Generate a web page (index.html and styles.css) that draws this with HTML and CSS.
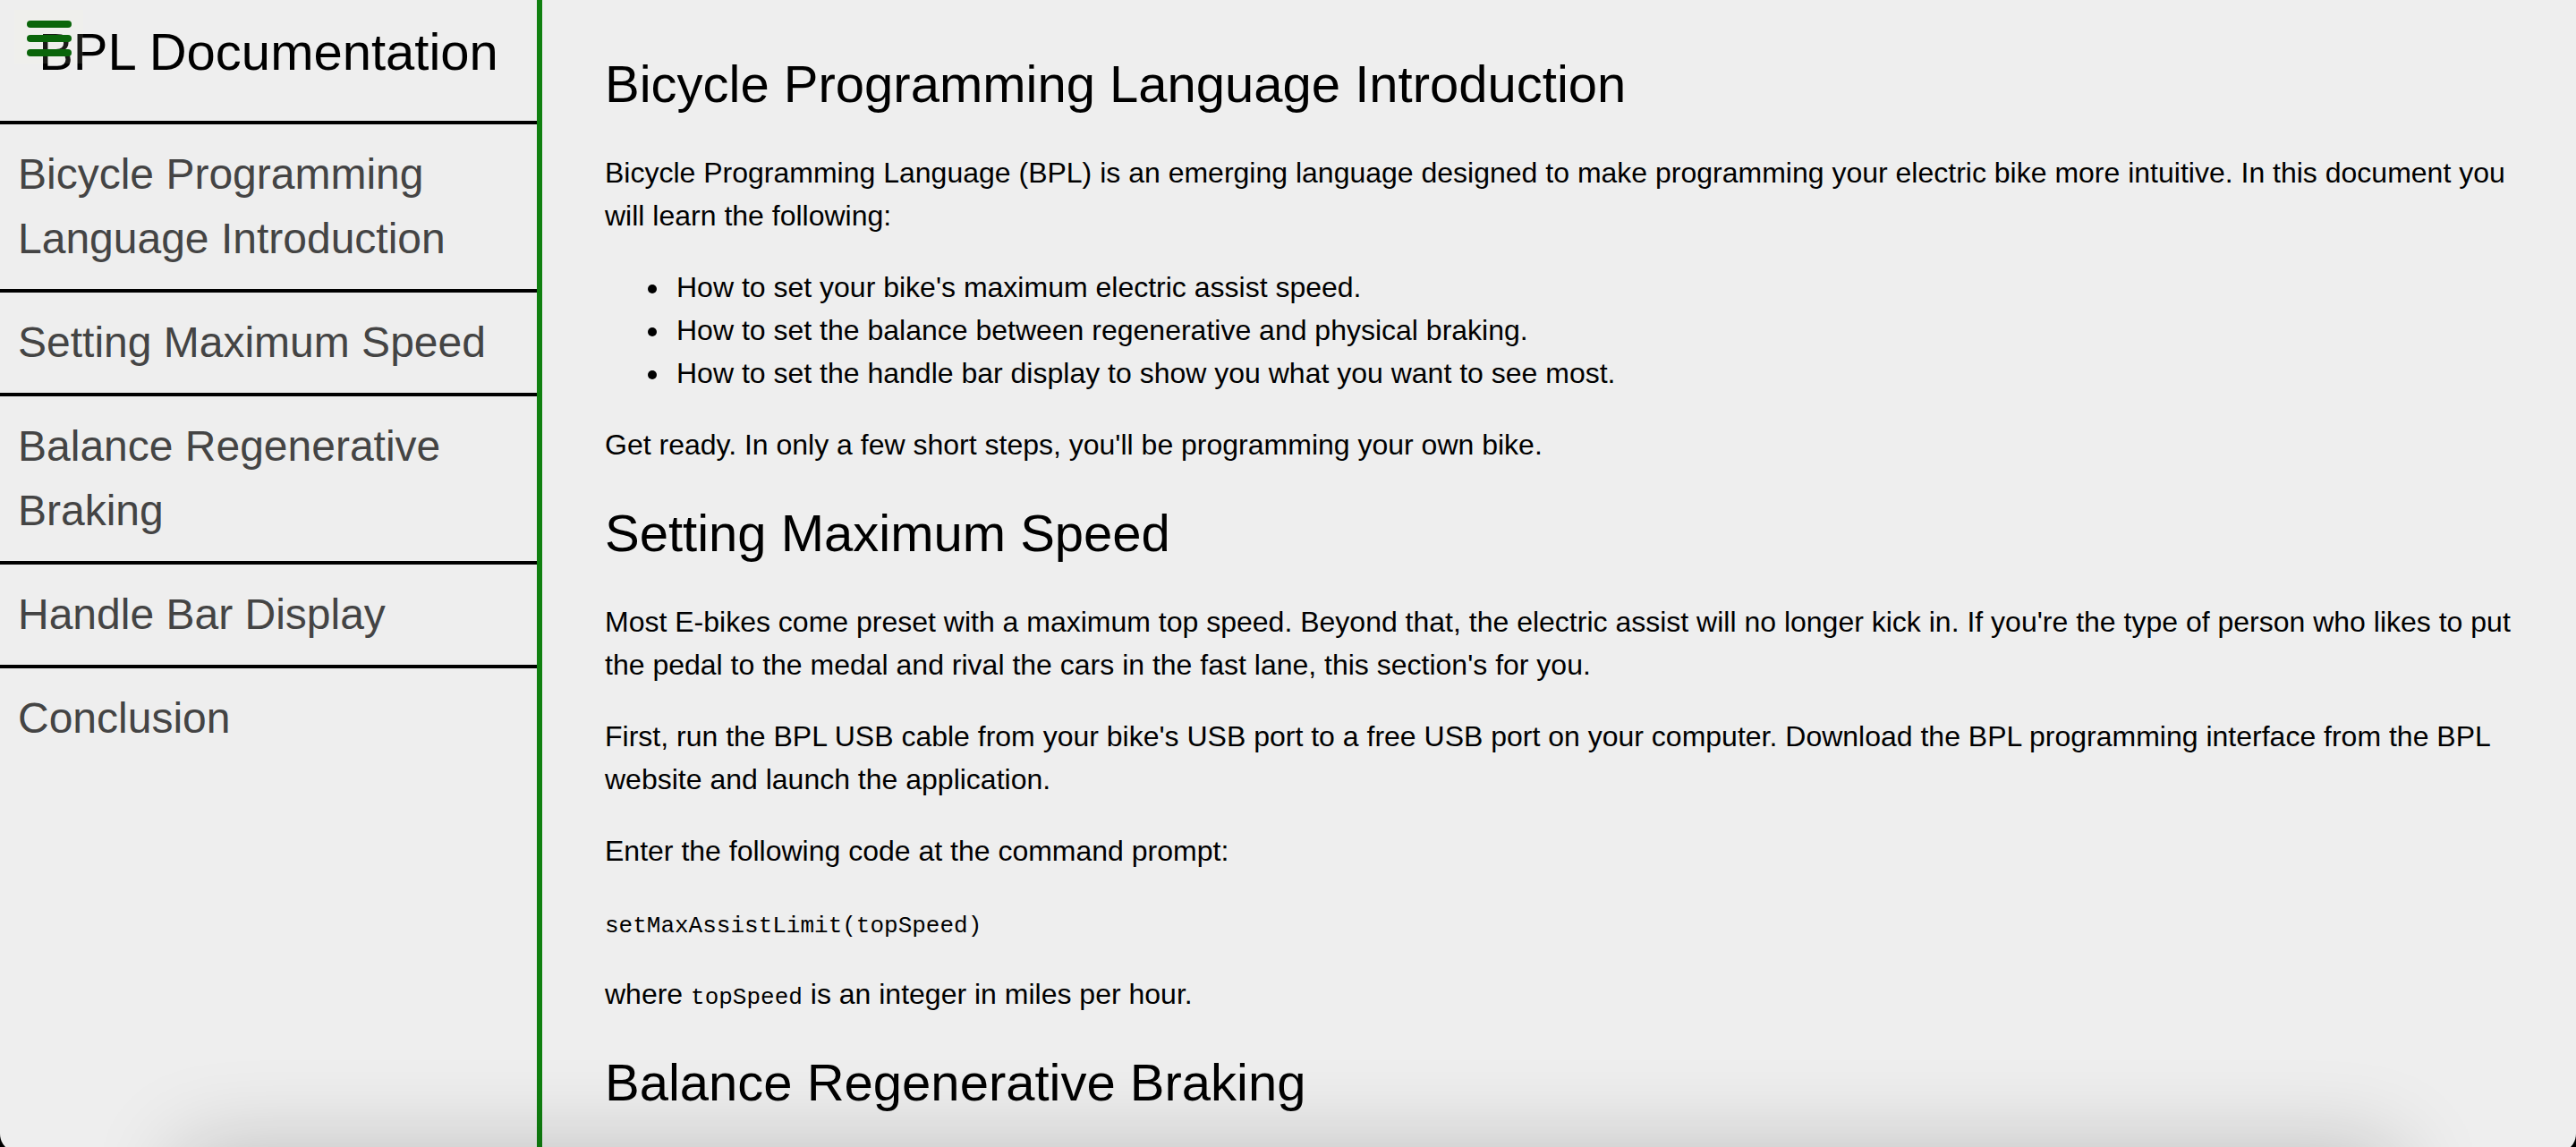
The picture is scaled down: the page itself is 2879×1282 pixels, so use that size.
FILE: index.html
```
<!DOCTYPE html>
<html lang="en">
<head>
<meta charset="utf-8">
<meta name="viewport" content="width=device-width, initial-scale=1">
<title>BPL Documentation</title>
<link rel="stylesheet" href="styles.css">
</head>
<body>
<div class="page">
  <nav class="sidebar" id="navbar">
    <header class="sidebar-title">BPL Documentation</header>
    <ul class="nav-list">
      <li><a class="nav-link" href="#introduction">Bicycle Programming Language Introduction</a></li>
      <li><a class="nav-link" href="#maximum-speed">Setting Maximum Speed</a></li>
      <li><a class="nav-link" href="#braking">Balance Regenerative Braking</a></li>
      <li><a class="nav-link" href="#display">Handle Bar Display</a></li>
      <li><a class="nav-link" href="#conclusion">Conclusion</a></li>
    </ul>
  </nav>
  <main class="content">
    <section id="introduction">
      <h1 class="heading">Bicycle Programming Language Introduction</h1>
      <p>Bicycle Programming Language (BPL) is an emerging language designed to make programming your electric bike more intuitive. In this document you will learn the following:</p>
      <ul class="topics">
        <li>How to set your bike's maximum electric assist speed.</li>
        <li>How to set the balance between regenerative and physical braking.</li>
        <li>How to set the handle bar display to show you what you want to see most.</li>
      </ul>
      <p>Get ready. In only a few short steps, you'll be programming your own bike.</p>
    </section>
    <section id="maximum-speed">
      <h2 class="heading">Setting Maximum Speed</h2>
      <p>Most E-bikes come preset with a maximum top speed. Beyond that, the electric assist will no longer kick in. If you're the type of person who likes to put the pedal to the medal and rival the cars in the fast lane, this section's for you.</p>
      <p>First, run the BPL USB cable from your bike's USB port to a free USB port on your computer. Download the BPL programming interface from the BPL website and launch the application.</p>
      <p>Enter the following code at the command prompt:</p>
      <p><code>setMaxAssistLimit(topSpeed)</code></p>
      <p>where <code>topSpeed</code> is an integer in miles per hour.</p>
    </section>
    <section id="braking">
      <h2 class="heading">Balance Regenerative Braking</h2>
    </section>
  </main>
</div>
<button class="menu-button" type="button" aria-label="Toggle menu" aria-controls="navbar">
  <span class="bar"></span>
  <span class="bar"></span>
  <span class="bar"></span>
</button>
<div class="window-frame"></div>
</body>
</html>
```
FILE: styles.css
```
* {
  box-sizing: border-box;
}

body {
  margin: 0;
  background: #eee;
  color: #000;
  font-family: "Liberation Sans", Helvetica, Arial, sans-serif;
  font-size: 32px;
  line-height: 48px;
}

.page {
  display: flex;
  min-height: 100vh;
}

.sidebar {
  flex: 0 0 606px;
  border-right: 6px solid #108010;
}

.sidebar-title {
  padding: 15px 0 34px;
  font-size: 58px;
  line-height: 86px;
  text-align: center;
}

.nav-list {
  margin: 0;
  padding: 0;
  list-style: none;
}

.nav-link {
  display: block;
  padding: 20px;
  border-top: 4px solid #000;
  color: #444;
  font-size: 48px;
  line-height: 72px;
  text-decoration: none;
}

.content {
  flex: 1;
  min-width: 0;
  padding: 51px 64px 0 70px;
}

.heading {
  margin: 0;
  font-size: 58px;
  font-weight: 400;
  line-height: 86px;
}

.content p,
.topics {
  margin: 32px 0;
}

.topics {
  padding-left: 74px;
}

.topics li {
  padding-left: 6px;
}

code {
  font-family: "Liberation Mono", "Courier New", monospace;
  font-size: 26px;
  line-height: 1;
}

/* The menu button floats over the sidebar title. */
.menu-button {
  position: fixed;
  top: 11px;
  left: 16px;
  display: flex;
  flex-direction: column;
  gap: 8px;
  width: 77px;
  height: 60px;
  padding: 12px 13px 0 14px;
  border: 0;
  background: rgba(255, 255, 224, 0.1);
}

.bar {
  height: 8px;
  border-radius: 4px;
  background: #0a650a;
}

/* Rounded lower window corners, with a soft shadow rising from the bottom edge. */
.window-frame {
  position: fixed;
  inset: 0 0 -7px;
  overflow: hidden;
  border-radius: 0 0 22px 22px;
  box-shadow: 0 0 0 30px #000;
  pointer-events: none;
}

.window-frame::after {
  content: "";
  position: absolute;
  right: 200px;
  bottom: -193px;
  left: 200px;
  height: 200px;
  box-shadow: 0 0 100px rgba(0, 0, 0, 0.2);
}
```
